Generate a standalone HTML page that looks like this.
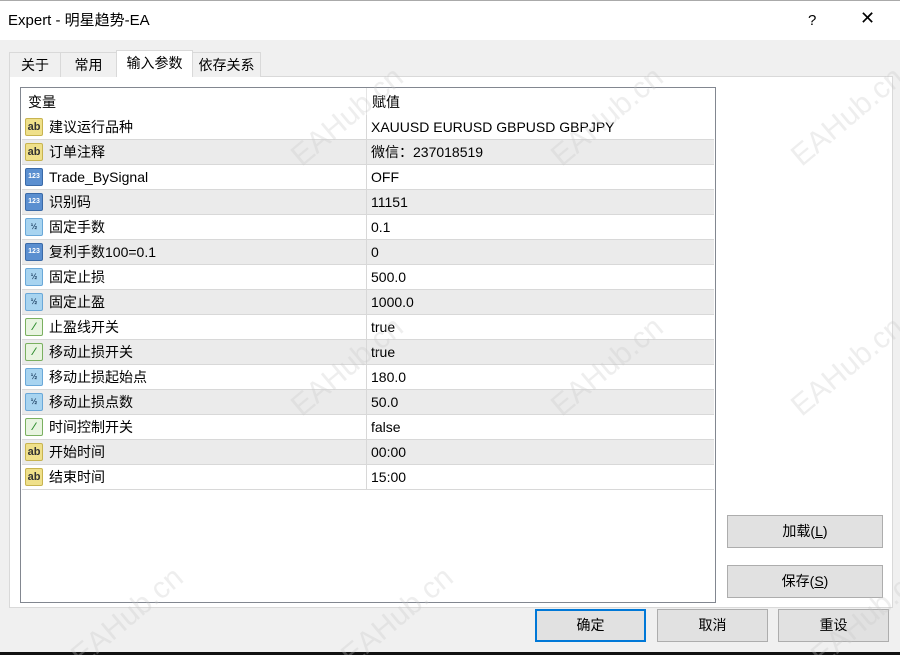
<!DOCTYPE html>
<html><head><meta charset="utf-8"><style>
*{margin:0;padding:0;box-sizing:border-box}
html,body{width:900px;height:655px;overflow:hidden}
body{background:#f0f0f0;font-family:"Liberation Sans","Noto Sans CJK SC",sans-serif;font-size:14px;line-height:17px;color:#000;position:relative}
.title{position:absolute;left:0;top:0;width:900px;height:40px;background:#fff;border-top:1px solid #aaa}
.title span{position:absolute;top:11px;font-size:15px}
.tab{position:absolute;top:52px;height:25px;border:1px solid #d9d9d9;border-bottom:none;background:#f0f0f0;padding-top:4px;text-align:center;font-size:14px}
.panel{position:absolute;left:9px;top:76px;width:884px;height:532px;background:#fff;border:1px solid #d9d9d9}
.list{position:absolute;left:20px;top:87px;width:696px;height:516px;border:1px solid #828790;background:#fff}
.row{position:absolute;left:1px;width:692px;height:25px;border-bottom:1px solid #d8d8d8}
.row.g{background:#ebebeb}
.row .n{position:absolute;left:27px;top:4px;height:17px}
.row .v{position:absolute;left:349px;top:4px;height:17px}
.row .d{position:absolute;left:344px;top:0;width:1px;height:25px;background:#d8d8d8}
.ic{position:absolute;left:3px;top:3px;width:18px;height:18px;border-radius:2px;font-size:9px;font-weight:bold;text-align:center;line-height:16px;font-style:normal}
.ab{background:#efe08a;border:1px solid #c8b450;color:#333;font-size:11px}
.n3{background:#5b8fd0;border:1px solid #3a6aa8;color:#fff;font-size:7px}
.hf{background:#a8d4f0;border:1px solid #6aa8d8;color:#246;font-size:8px}
.sw{background:#e8f4e0;border:1px solid #7ab060;color:#2a8a2a;font-size:11px}
.btn{position:absolute;height:33px;background:#e1e1e1;border:1px solid #adadad;text-align:center;line-height:31px;font-size:14px}
.wm{position:absolute;color:rgba(200,200,200,.3);font-size:30px;line-height:34px;transform:rotate(-40deg);white-space:nowrap;font-family:"Liberation Sans",sans-serif}
</style></head><body>
<div class="title"><span style="left:8px">Expert - 明星趋势-EA</span><span style="left:808px">?</span><span style="left:860px;font-size:18px;top:9px">✕</span></div>
<div class="panel"></div>
<div class="tab" style="left:9px;width:52px">关于</div>
<div class="tab" style="left:60px;width:57px">常用</div>
<div class="tab" style="left:116px;top:50px;height:27px;width:77px;background:#fff">输入参数</div>
<div class="tab" style="left:192px;width:69px">依存关系</div>
<div class="list">
<div style="position:absolute;left:7px;top:6px">变量</div>
<div style="position:absolute;left:351px;top:6px">赋值</div>
<div style="position:absolute;left:345px;top:0;width:1px;height:27px;background:#e5e5e5"></div>
<div class="row" style="top:27px"><i class="ic ab">ab</i><span class="n">建议运行品种</span><i class="d"></i><span class="v">XAUUSD EURUSD GBPUSD GBPJPY</span></div>
<div class="row g" style="top:52px"><i class="ic ab">ab</i><span class="n">订单注释</span><i class="d"></i><span class="v">微信：237018519</span></div>
<div class="row" style="top:77px"><i class="ic n3">123</i><span class="n">Trade_BySignal</span><i class="d"></i><span class="v">OFF</span></div>
<div class="row g" style="top:102px"><i class="ic n3">123</i><span class="n">识别码</span><i class="d"></i><span class="v">11151</span></div>
<div class="row" style="top:127px"><i class="ic hf">½</i><span class="n">固定手数</span><i class="d"></i><span class="v">0.1</span></div>
<div class="row g" style="top:152px"><i class="ic n3">123</i><span class="n">复利手数100=0.1</span><i class="d"></i><span class="v">0</span></div>
<div class="row" style="top:177px"><i class="ic hf">½</i><span class="n">固定止损</span><i class="d"></i><span class="v">500.0</span></div>
<div class="row g" style="top:202px"><i class="ic hf">½</i><span class="n">固定止盈</span><i class="d"></i><span class="v">1000.0</span></div>
<div class="row" style="top:227px"><i class="ic sw">⁄</i><span class="n">止盈线开关</span><i class="d"></i><span class="v">true</span></div>
<div class="row g" style="top:252px"><i class="ic sw">⁄</i><span class="n">移动止损开关</span><i class="d"></i><span class="v">true</span></div>
<div class="row" style="top:277px"><i class="ic hf">½</i><span class="n">移动止损起始点</span><i class="d"></i><span class="v">180.0</span></div>
<div class="row g" style="top:302px"><i class="ic hf">½</i><span class="n">移动止损点数</span><i class="d"></i><span class="v">50.0</span></div>
<div class="row" style="top:327px"><i class="ic sw">⁄</i><span class="n">时间控制开关</span><i class="d"></i><span class="v">false</span></div>
<div class="row g" style="top:352px"><i class="ic ab">ab</i><span class="n">开始时间</span><i class="d"></i><span class="v">00:00</span></div>
<div class="row" style="top:377px"><i class="ic ab">ab</i><span class="n">结束时间</span><i class="d"></i><span class="v">15:00</span></div>
</div>
<div class="btn" style="left:727px;top:515px;width:156px">加载(<u>L</u>)</div>
<div class="btn" style="left:727px;top:565px;width:156px">保存(<u>S</u>)</div>
<div class="btn" style="left:535px;top:609px;width:111px;border:2px solid #0078d7;line-height:29px">确定</div>
<div class="btn" style="left:657px;top:609px;width:111px">取消</div>
<div class="btn" style="left:778px;top:609px;width:111px">重设</div>
<div style="position:absolute;left:0;top:652px;width:900px;height:3px;background:#111"></div>
<div class="wm" style="left:280px;top:100px">EAHub.cn</div>
<div class="wm" style="left:540px;top:100px">EAHub.cn</div>
<div class="wm" style="left:780px;top:100px">EAHub.cn</div>
<div class="wm" style="left:280px;top:350px">EAHub.cn</div>
<div class="wm" style="left:540px;top:350px">EAHub.cn</div>
<div class="wm" style="left:780px;top:350px">EAHub.cn</div>
<div class="wm" style="left:60px;top:600px">EAHub.cn</div>
<div class="wm" style="left:330px;top:600px">EAHub.cn</div>
<div class="wm" style="left:800px;top:600px">EAHub.cn</div>
</body></html>
